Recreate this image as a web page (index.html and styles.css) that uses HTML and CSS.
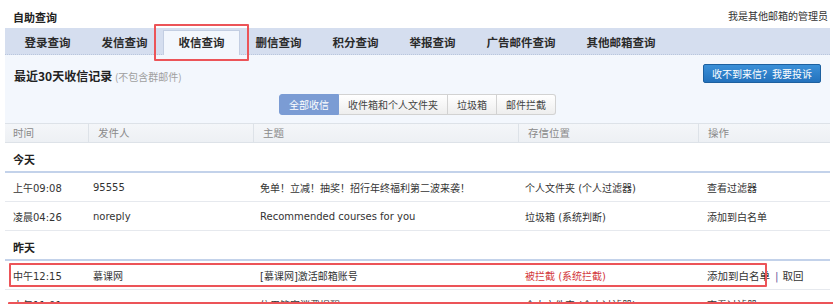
FILE: index.html
```html
<!DOCTYPE html>
<html>
    <head>
        <title>自助查询</title>
        <link rel="stylesheet" href="styles.css">
    </head>
    <body>
        <div class="page">
            <div class="topbar">
                <span class="title">自助查询</span>
                <a class="admin">我是其他邮箱的管理员</a>
            </div>
            <div class="tabs">
                <span class="tab">登录查询</span>
                <span class="tab">发信查询</span>
                <span class="tab active">收信查询</span>
                <span class="tab">删信查询</span>
                <span class="tab">积分查询</span>
                <span class="tab">举报查询</span>
                <span class="tab">广告邮件查询</span>
                <span class="tab">其他邮箱查询</span>
            </div>
            <div class="panel">
                <div class="panel-head">
                    <div class="heading">最近30天收信记录 <span class="note">(不包含群邮件)</span></div>
                    <button class="complain">收不到来信？我要投诉</button>
                </div>
                <div class="filters">
                    <span class="seg on">全部收信</span>
                    <span class="seg">收件箱和个人文件夹</span>
                    <span class="seg">垃圾箱</span>
                    <span class="seg">邮件拦截</span>
                </div>
            </div>
            <div class="list">
                <div class="thead">
                    <span>时间</span>
                    <span>发件人</span>
                    <span>主题</span>
                    <span>存信位置</span>
                    <span>操作</span>
                </div>
                <div class="group">今天</div>
                <div class="row">
                    <span>上午09:08</span>
                    <span>95555</span>
                    <span>免单！立减！抽奖！招行年终福利第二波来袭！</span>
                    <span>个人文件夹 (个人过滤器)</span>
                    <span>查看过滤器</span>
                </div>
                <div class="row">
                    <span>凌晨04:26</span>
                    <span>noreply</span>
                    <span>Recommended courses for you</span>
                    <span>垃圾箱 (系统判断)</span>
                    <span>添加到白名单</span>
                </div>
                <div class="group">昨天</div>
                <div class="row">
                    <span>中午12:15</span>
                    <span>慕课网</span>
                    <span>[慕课网]激活邮箱账号</span>
                    <span class="blocked">被拦截 (系统拦截)</span>
                    <span class="ops">添加到白名单<i class="bar">|</i>取回</span>
                </div>
                <div class="row">
                    <span>中午11:01</span>
                    <span>ccsvc</span>
                    <span>信用管家消费提醒</span>
                    <span>个人文件夹 (个人过滤器)</span>
                    <span>查看过滤器</span>
                </div>
            </div>
            <div class="mark mark-tab"></div>
            <div class="mark mark-row"></div>
            <div class="mark mark-next"></div>
        </div>
    </body>
</html>
```

FILE: styles.css
```css
body{
    margin: 0;
    background-color: #ffffff;
    font-family: "DejaVu Sans", "Noto Sans CJK SC", sans-serif;
    font-size: 10px;
    color: #333333;
    overflow: hidden;
}
.page{
    position: relative;
    width: 833px;
    height: 304px;
    overflow: hidden;
}
.topbar{
    height: 23px;
    padding: 5px 5px 0 13px;

    display: flex;
    align-items: center;
    justify-content: space-between;
}
.title{
    font-family: "Noto Sans CJK SC", sans-serif;
    font-size: 11px;
    font-weight: bold;
    color: #222222;
}
.admin{
    font-family: "Noto Sans CJK SC", sans-serif;
    font-size: 10px;
    color: #333333;
    margin-top: -3px;
}
.tabs{
    margin: 0 3px 0 5px;
    height: 26px;
    padding-left: 4px;
    background-color: #d5deef;
    border-bottom: 1px dotted #b9c6dd;

    display: flex;
    align-items: flex-end;
}
.tab{
    height: 23px;
    line-height: 23px;
    padding: 0 14.5px;
    font-family: "Noto Sans CJK SC", sans-serif;
    font-size: 11.5px;
    font-weight: bold;
    color: #2b2b2b;
    border: 1px solid transparent;
    border-bottom: none;
}
.tab.active{
    background-color: #f3f7fd;
    border-color: #c3cee2;
    height: 23px;
    margin-bottom: -1px;
    padding-bottom: 1px;
}
.panel{
    margin: 0 3px 0 5px;
    padding: 9px 9px 8px 9px;
    background-color: #f3f7fd;
}
.panel-head{
    height: 19px;

    display: flex;
    align-items: center;
    justify-content: space-between;
}
.heading{
    margin-top: 3px;
    font-family: "Noto Sans CJK SC", sans-serif;
    font-size: 12px;
    font-weight: bold;
    color: #222222;
}
.note{
    font-size: 10px;
    font-weight: normal;
    color: #a0a0a0;
}
.complain{
    width: 118px;
    height: 19px;
    padding: 0;
    font-family: "Noto Sans CJK SC", sans-serif;
    font-size: 10px;
    color: #ffffff;
    background: linear-gradient(#3b90d8, #2372bd);
    border: 1px solid #1d609f;
    border-radius: 2px;
}
.filters{
    margin-top: 11px;

    display: flex;
    justify-content: center;
}
.seg{
    height: 19px;
    line-height: 19px;
    padding: 0 9px;
    font-family: "Noto Sans CJK SC", sans-serif;
    font-size: 10px;
    color: #444444;
    background: linear-gradient(#ffffff, #eeeeee);
    border: 1px solid #d2d2d2;
    border-left: none;
}
.seg:first-child{
    border-left: 1px solid #d2d2d2;
    border-radius: 3px 0 0 3px;
}
.seg:last-child{
    border-radius: 0 3px 3px 0;
}
.seg.on{
    background: #7b9cd4;
    border-color: #7b9cd4;
    color: #ffffff;
}
.list{
    margin: 0 3px 0 5px;
}
.thead, .row{
    display: grid;
    grid-template-columns: 83px 165px 265px 180px 1fr;
}
.thead{
    height: 18px;
    background: linear-gradient(#f4f6f9, #edf0f4);
    border-top: 1px solid #dde2e8;
    border-bottom: 1px solid #dde2e8;
    color: #8a8a8a;
    font-size: 10.5px;
}
.thead span{
    padding-left: 9px;
    line-height: 18px;
    border-left: 1px solid #dde2e8;
}
.thead span:first-child{
    padding-left: 8px;
    border-left: none;
}
.group{
    height: 28px;
    padding-left: 8px;
    border-bottom: 2px solid #c3d2ea;
    font-family: "Noto Sans CJK SC", sans-serif;
    font-size: 11px;
    font-weight: bold;
    color: #222222;

    display: flex;
    align-items: flex-end;
    line-height: 24px;
}
.row{
    height: 28px;
    border-bottom: 1px solid #e6e9ee;
    align-items: center;
}
.row span{
    padding-left: 7px;
    white-space: nowrap;
}
.row span:first-child{
    padding-left: 8px;
}
.row span:nth-child(2){
    padding-left: 5px;
}
.row span:last-child{
    padding-left: 9px;
}
.blocked{
    color: #d2363a;
}
.ops{
    font-size: 10.5px;
    color: #333333;
}
.bar{
    font-style: normal;
    color: #6e5a9e;
    margin: 0 4px 0 5px;
}
.mark{
    position: absolute;
    border: 2px solid #ec5458;
    border-radius: 1px;
}
.mark-tab{
    left: 154px;
    top: 24px;
    width: 91px;
    height: 33px;
}
.mark-row{
    left: 9px;
    top: 263px;
    width: 754px;
    height: 20px;
}
.mark-next{
    left: 8px;
    top: 302px;
    width: 830px;
    height: 20px;
}
```
